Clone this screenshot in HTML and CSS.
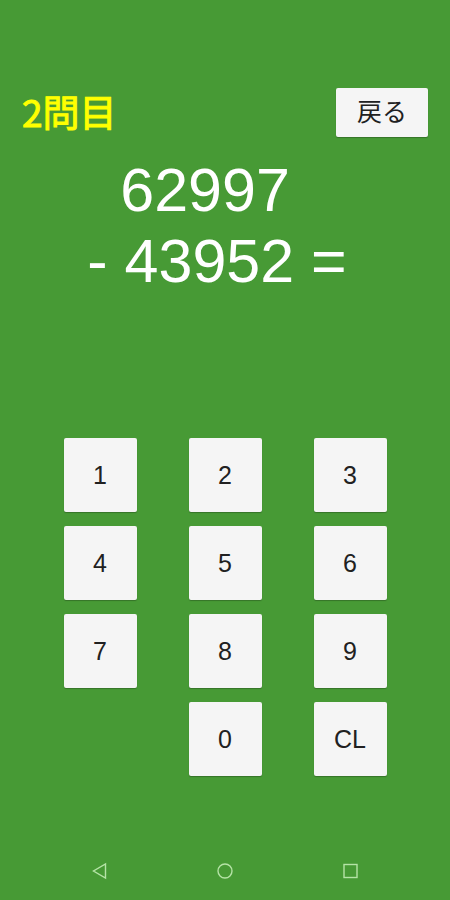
FILE: index.html
```
<!DOCTYPE html>
<html lang="ja">
<head>
  <title>2問目</title>
  <meta charset="utf-8">
  <meta name="viewport" content="width=device-width, initial-scale=1">
  <link rel="stylesheet" href="styles.css">
</head>
<body>
  <div class="screen">
    <header class="top-bar">
      <h1 class="question-number">2問目</h1>
      <button type="button" class="btn back-btn">戻る</button>
    </header>

    <main class="main">
      <div class="expression">
        <div class="first-operand">62997</div>
        <div>- 43952 =</div>
      </div>

      <!-- Number pad -->
      <div class="keypad">
        <button type="button" class="btn key">1</button>
        <button type="button" class="btn key">2</button>
        <button type="button" class="btn key">3</button>
        <button type="button" class="btn key">4</button>
        <button type="button" class="btn key">5</button>
        <button type="button" class="btn key">6</button>
        <button type="button" class="btn key">7</button>
        <button type="button" class="btn key">8</button>
        <button type="button" class="btn key">9</button>
        <button type="button" class="btn key key-zero">0</button>
        <button type="button" class="btn key">CL</button>
      </div>
    </main>

    <!-- System navigation -->
    <nav class="nav-bar">
      <button type="button" class="nav-btn" aria-label="Back">
        <svg width="18" height="18" viewBox="0 0 18 18"><path d="M14.5 2v14L2.5 9z"/></svg>
      </button>
      <button type="button" class="nav-btn" aria-label="Home">
        <svg width="18" height="18" viewBox="0 0 18 18"><circle cx="9" cy="9" r="7"/></svg>
      </button>
      <button type="button" class="nav-btn" aria-label="Recent apps">
        <svg width="18" height="18" viewBox="0 0 18 18"><rect x="3" y="2.5" width="13" height="13"/></svg>
      </button>
    </nav>
  </div>
</body>
</html>
```

FILE: styles.css
```
* {
  box-sizing: border-box;
}

body {
  margin: 0;
  background: #479a35;
  font-family: "Liberation Sans", "Noto Sans CJK JP", sans-serif;
}

.screen {
  min-height: 100vh;
  display: flex;
  flex-direction: column;
}

.top-bar {
  display: flex;
  justify-content: space-between;
  align-items: flex-start;
  padding: 88px 22px 0;
}

.question-number {
  margin: 0;
  color: #ffff00;
  font-family: "Noto Sans CJK JP", sans-serif;
  font-size: 37px;
  font-weight: 400;
  line-height: 46px;
  -webkit-text-stroke: 1px #ffff00;
}

.btn {
  border: 0;
  border-radius: 2px;
  padding: 0;
  background: #f5f5f5;
  color: #212121;
  font-family: inherit;
  font-size: 25px;
  box-shadow: 0 1px 1px rgba(0, 0, 0, 0.25);
}

.back-btn {
  padding: 0 21px;
  line-height: 49px;
}

.main {
  flex: 1;
  display: flex;
  flex-direction: column;
  align-items: center;
}

.expression {
  margin-top: 18px;
  padding-right: 16px;
  color: #fff;
  font-size: 61px;
  line-height: 71px;
}

.first-operand {
  padding-left: 33px;
}

.keypad {
  margin-top: 141px;
  display: grid;
  grid-template-columns: repeat(3, 73px);
  gap: 14px 52px;
}

.key {
  height: 74px;
}

/* leaves the spot under 7 empty */
.key-zero {
  grid-column: 2;
}

.nav-bar {
  display: flex;
  justify-content: center;
  gap: 107px;
  padding: 20px 0;
}

.nav-btn {
  display: flex;
  border: 0;
  padding: 0;
  background: none;
}

.nav-btn svg {
  fill: none;
  stroke: #b5e3a6;
  stroke-width: 1.4;
}
```
